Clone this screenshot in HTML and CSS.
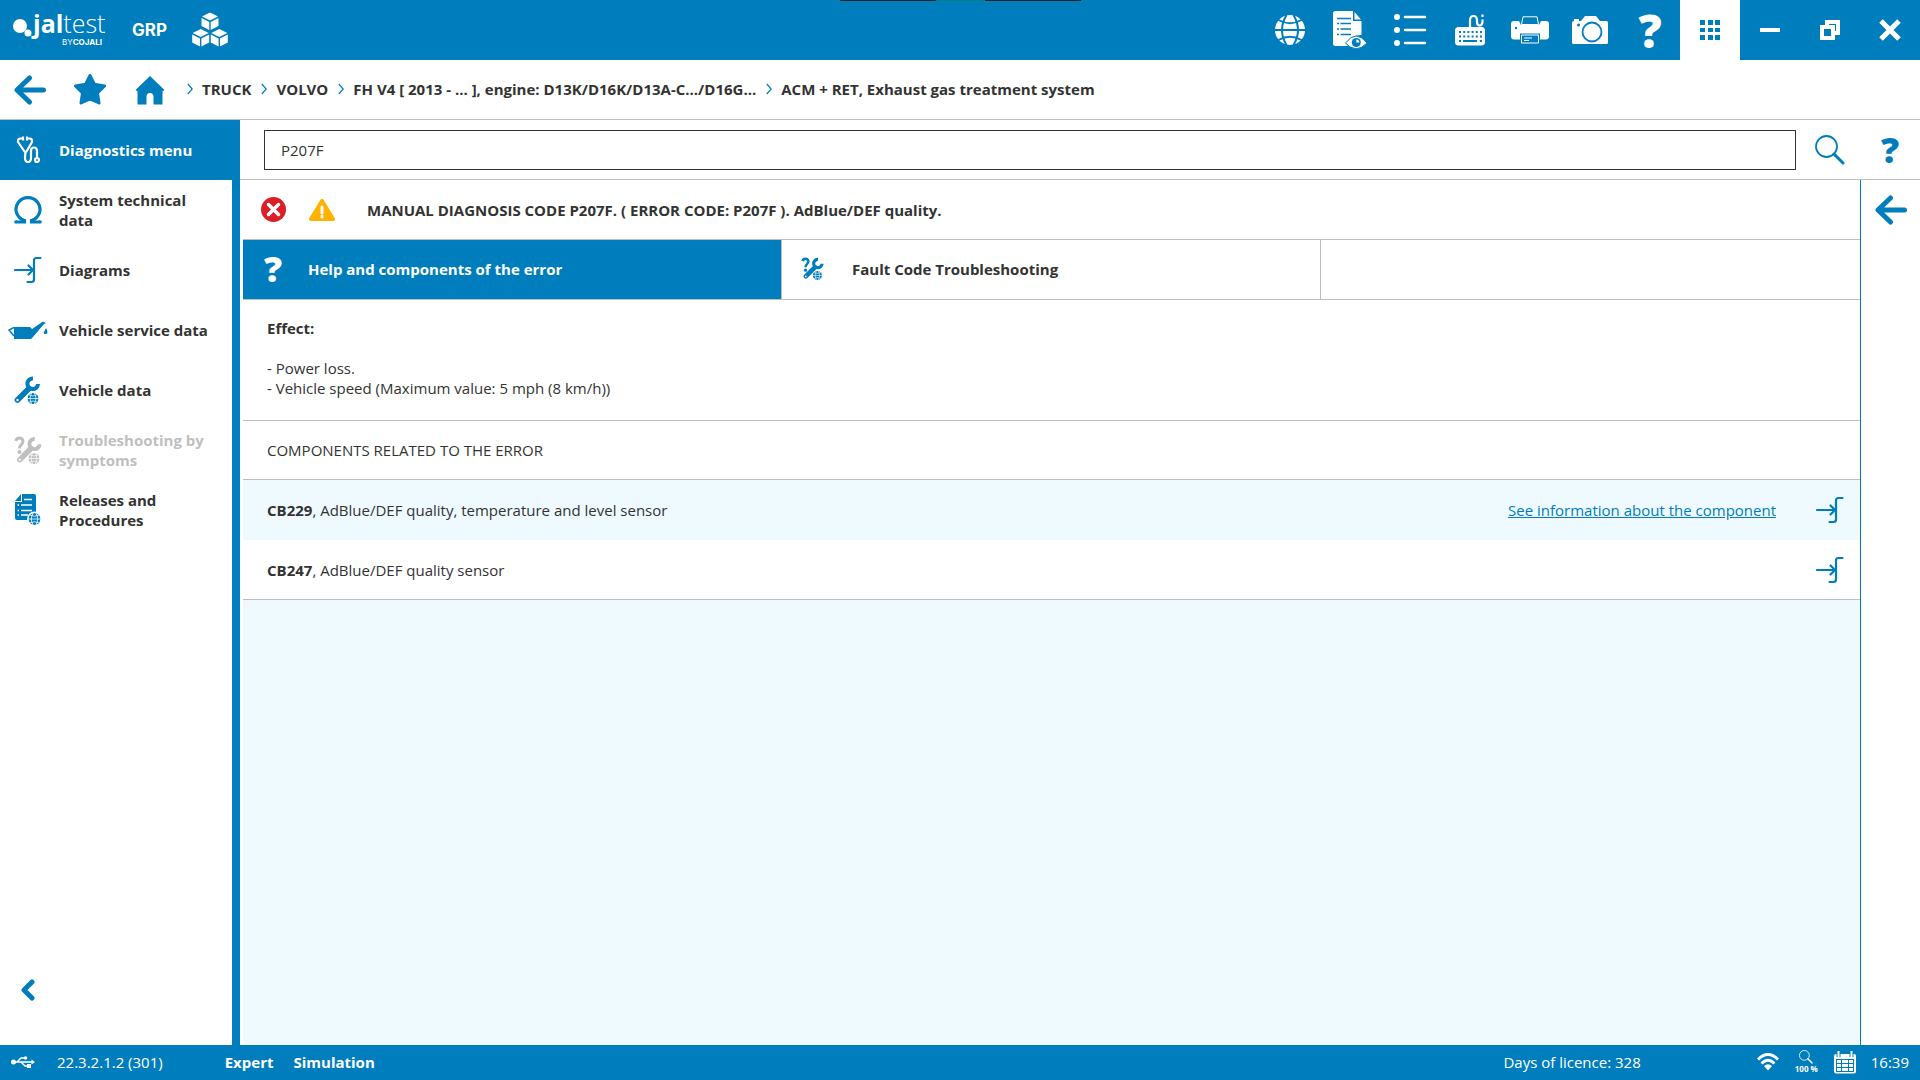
FILE: index.html
```
<!DOCTYPE html>
<html lang="en">
<head>
  <meta charset="UTF-8" />
  <meta name="viewport" content="width=device-width, initial-scale=1.0" />
  <title>Jaltest - Diagnostics</title>
  <link rel="stylesheet" href="styles.css">
</head>

<body>
  <!-- shared icons -->
  <svg class="sprite" aria-hidden="true">
    <symbol id="i-globe" viewBox="0 0 30 30">
      <circle cx="15" cy="15" r="15" fill="currentColor"/>
      <g fill="none" stroke="var(--cut)" stroke-width="2">
        <path d="M0 15H30M3.500 5Q15 11.500 26.500 5M3.500 25Q15 18.500 26.500 25"/>
        <path d="M11.500 0Q2.500 15 11.500 30M18.500 0Q27.500 15 18.500 30"/>
      </g>
    </symbol>
    <symbol id="i-arrow" viewBox="0 0 32 30">
      <path d="M29.500 15H4M15.500 3 3 15 15.500 27" fill="none" stroke="currentColor" stroke-width="5" stroke-linecap="round" stroke-linejoin="round"/>
    </symbol>
    <symbol id="i-diagram" viewBox="0 0 28 28">
      <g fill="none" stroke="currentColor" stroke-width="2.200" stroke-linecap="round" stroke-linejoin="round">
        <path d="M1 14H19M14.500 9.500 19 14 14.500 18.500"/>
        <path d="M26.500 2H22.500Q20 2 20 4.500V23.500Q20 26 17.500 26H13.500"/>
      </g>
    </symbol>
    <symbol id="i-wrench" viewBox="0 0 28 28">
      <path d="M4.500 24 16 12.500" stroke="currentColor" stroke-width="5.800" stroke-linecap="round"/>
      <path d="M20 2.500A5.300 5.300 0 1 0 25 8" fill="none" stroke="currentColor" stroke-width="4"/>
      <circle cx="4.500" cy="24" r="1.200" fill="var(--cut)"/>
    </symbol>
    <symbol id="i-trouble" viewBox="0 0 28 28">
      <path d="M1.800 5Q2.500 2 5.500 2T9 5.300Q9 7.500 7 9Q5.500 10.300 5.500 12.500" fill="none" stroke="currentColor" stroke-width="3"/>
      <circle cx="5.500" cy="16" r="2" fill="currentColor"/>
      <use href="#i-wrench" x="1.500" y="0" width="27" height="28"/>
      <circle cx="20" cy="22.500" r="6.500" fill="var(--cut)"/>
      <use href="#i-globe" x="14.500" y="17" width="11" height="11"/>
    </symbol>
    <symbol id="i-chevron" viewBox="0 0 6 12">
      <path d="M.8 1 5.200 6 .8 11" fill="none" stroke="currentColor" stroke-width="1.200"/>
    </symbol>
    <symbol id="i-search" viewBox="0 0 30 30">
      <circle cx="11.500" cy="11.500" r="10.500" fill="none" stroke="currentColor" stroke-width="1.800"/>
      <path d="M19 19 28 28" stroke="currentColor" stroke-width="3" stroke-linecap="round"/>
    </symbol>
  </svg>

  <header class="topbar">
    <div class="notch"></div>
    <svg class="logo" width="120" height="60" viewBox="0 0 120 60" role="img" aria-label="Jaltest by Cojali">
      <circle cx="20" cy="26" r="7"/>
      <circle cx="28" cy="33" r="3.500"/>
      <text x="33" y="33" font-size="25"><tspan font-weight="700">jal</tspan><tspan font-weight="300">test</tspan></text>
      <text class="byline" x="62" y="45" font-size="8">BY<tspan font-weight="700">COJALI</tspan></text>
    </svg>
    <span class="brand">GRP</span>
    <svg class="cubes" width="36" height="36" viewBox="0 0 36 36">
      <g id="cube">
        <path d="M18 .5 26 4.500 18 8.500 10 4.500z"/>
        <path d="M9.500 6 17.300 10V18L9.500 14zM26.500 6 18.700 10V18L26.500 14z"/>
      </g>
      <use href="#cube" x="-9.300" y="16.500"/>
      <use href="#cube" x="9.300" y="16.500"/>
    </svg>

    <div class="tools">
      <button aria-label="Web"><svg width="30" height="30"><use href="#i-globe"/></svg></button>
      <button aria-label="View report">
        <svg width="34" height="38" viewBox="0 0 34 38">
          <path d="M2.500 0H20V10H28.500V24C20 24 16 28 13 32L15 35H2.500Q0 35 0 32.500V2.500Q0 0 2.500 0zM21.500 1 28 8.500H21.500z" fill="currentColor"/>
          <path d="M4 7.500H18M7.500 12.500H18M7.500 18H18M7.500 23.500H18" stroke="var(--cut)" stroke-width="1.500"/>
          <path d="M4 12.500H6M4 18H6M4 23.500H6" stroke="var(--cut)" stroke-width="1.500"/>
          <path d="M12.500 32Q23 18 34 32Q23 43.500 12.500 32z" fill="currentColor" stroke="var(--cut)"/>
          <circle cx="23.300" cy="31.500" r="4.500" fill="var(--cut)"/>
          <path d="M23.300 31.500V28.500A3 3 0 0 1 26.300 31.500z" fill="currentColor"/>
        </svg>
      </button>
      <button aria-label="List">
        <svg width="34" height="34" viewBox="0 0 34 34">
          <g fill="currentColor"><circle cx="4" cy="4" r="3"/><circle cx="4" cy="17" r="3"/><circle cx="4" cy="30" r="3"/></g>
          <path d="M12 4H32M12 17H32M12 30H32" stroke="currentColor" stroke-width="2.500" stroke-linecap="round"/>
        </svg>
      </button>
      <button aria-label="Keyboard">
        <svg width="32" height="32" viewBox="0 0 32 32">
          <path d="M16 14V6.500Q16 2 19.500 2T23 6.500V8Q23 11.500 25.500 11.500T28.500 8V5.500M28.500 3V.5" fill="none" stroke="currentColor" stroke-width="2.200"/>
          <rect x="1" y="13" width="30" height="18.500" rx="3.500" fill="currentColor"/>
          <path d="M5 18H28M5 22.500H28" stroke="var(--cut)" stroke-width="2" stroke-dasharray="2 2.200"/>
          <path d="M5 27H7M9 27H23M25.800 27H28" stroke="var(--cut)" stroke-width="2"/>
        </svg>
      </button>
      <button aria-label="Print">
        <svg width="38" height="28" viewBox="0 0 38 28">
          <path d="M3 5H8L10 9H28L30 5H35Q38 5 38 8V20Q38 23.500 35 23.500H3Q0 23.500 0 20V8Q0 5 3 5z" fill="currentColor"/>
          <path d="M9 17.500H29V24H9z" fill="var(--cut)"/>
          <path d="M12 .8H26L27.500 8.500H10.500zM10.500 19H27.500V27H10.500z" fill="var(--cut)" stroke="currentColor"/>
          <path d="M13 22H21M13 24.500H18" stroke="currentColor"/>
          <circle cx="5" cy="12" r="1.200" fill="var(--cut)"/>
        </svg>
      </button>
      <button aria-label="Screenshot">
        <svg width="36" height="30" viewBox="0 0 36 30">
          <path d="M2 6V4H7V6H9L13 1H24L28 6H34.500Q36 6 36 7.500V27.500Q36 29 34.500 29H1.500Q0 29 0 27.500V7.500Q0 6 2 6z" fill="currentColor"/>
          <circle cx="20" cy="17" r="9.500" fill="none" stroke="var(--cut)" stroke-width="1.800"/>
          <circle cx="6.500" cy="10" r="1.500" fill="var(--cut)"/>
        </svg>
      </button>
      <button class="help-lg" aria-label="Help">?</button>
      <button class="apps" aria-label="Applications">
        <svg width="20" height="20" viewBox="0 0 20 20">
          <path d="M0 0H5V5H0zM8 0H13V5H8zM15 0H20V5H15zM0 8H5V12H0zM8 8H13V12H8zM15 8H20V12H15zM0 15H5V20H0zM8 15H13V20H8zM15 15H20V20H15z"/>
        </svg>
      </button>
      <button aria-label="Minimize"><svg width="20" height="4"><rect width="20" height="4"/></svg></button>
      <button aria-label="Restore">
        <svg width="20" height="20" viewBox="0 0 20 20">
          <path fill-rule="evenodd" d="M5 0H20V15H15V20H0V5H5zM9 4V5H15V11H16V4zM4 9V16H11V9z"/>
        </svg>
      </button>
      <button aria-label="Close"><svg width="22" height="22" viewBox="0 0 22 22"><path d="M2 2 20 20M20 2 2 20" stroke="currentColor" stroke-width="5"/></svg></button>
    </div>
  </header>

  <nav class="crumbs" aria-label="Breadcrumb">
    <button aria-label="Back"><svg width="32" height="30"><use href="#i-arrow"/></svg></button>
    <button aria-label="Favourites">
      <svg width="32" height="31" viewBox="0 0 32 31"><path d="M16 1.500 20.400 10.200 30.500 12 23.500 19 25 29 16 24.800 7 29 8.500 19 1.500 12 11.600 10.200z" stroke="currentColor" stroke-width="3" stroke-linejoin="round"/></svg>
    </button>
    <button aria-label="Home">
      <svg width="30" height="30" viewBox="0 0 30 30"><path d="M15 1 29.500 15 28 16H27.500V29.500H18.500V22Q18.500 18 15 18T11.500 22V29.500H2.500V16H2L.5 15z"/></svg>
    </button>
    <ol class="trail">
      <li><svg width="6" height="12"><use href="#i-chevron"/></svg><a href="#">TRUCK</a></li>
      <li><svg width="6" height="12"><use href="#i-chevron"/></svg><a href="#">VOLVO</a></li>
      <li><svg width="6" height="12"><use href="#i-chevron"/></svg><a href="#">FH V4 [ 2013 - ... ], engine: D13K/D16K/D13A-C.../D16G...</a></li>
      <li><svg width="6" height="12"><use href="#i-chevron"/></svg><a href="#">ACM + RET, Exhaust gas treatment system</a></li>
    </ol>
  </nav>

  <div class="layout">
    <aside class="sidebar">
      <a class="item active" href="#">
        <span class="ico">
          <svg width="24" height="28" viewBox="0 0 24 28">
            <g fill="none" stroke="currentColor" stroke-width="2.200" stroke-linejoin="round">
              <path d="M7 2.500H4Q1.500 3 2 6L8.500 15.500H10.500L16 6Q16.500 3 14 2.500H11"/>
              <path d="M7 .5V4.500M11 .5V4.500M9.500 15.500 9 22Q9 26 12 26T15 22V15Q15 11.500 18 11.500T21 15V22"/>
              <circle cx="21" cy="24" r="2"/>
            </g>
          </svg>
        </span>
        <span>Diagnostics menu</span>
      </a>
      <a class="item" href="#">
        <span class="ico">
          <svg width="28" height="28" viewBox="0 0 28 28"><path d="M1.500 24.500 2 26H10.500V24.500A12 11.700 0 1 1 17.500 24.500V26H26L26.500 24.500" fill="none" stroke="currentColor" stroke-width="3.200"/></svg>
        </span>
        <span>System technical data</span>
      </a>
      <a class="item" href="#">
        <span class="ico"><svg width="28" height="28"><use href="#i-diagram"/></svg></span>
        <span>Diagrams</span>
      </a>
      <a class="item" href="#">
        <span class="ico">
          <svg width="40" height="18" viewBox="0 0 40 18">
            <path d="M6 6H22L24 8 35 .5 38 2 36 3 25 16 23 18H6z"/>
            <path d="M6 6.500 1 9 6 15" fill="none" stroke="currentColor" stroke-width="1.500"/>
            <path d="M38 7Q41 12.500 38 13T36 11z"/>
          </svg>
        </span>
        <span>Vehicle service data</span>
      </a>
      <a class="item" href="#">
        <span class="ico">
          <svg width="28" height="28" viewBox="0 0 28 28">
            <use href="#i-wrench" x="-1" y="0" width="28" height="28"/>
            <circle cx="19" cy="22.500" r="6.500" fill="var(--cut)"/>
            <use href="#i-globe" x="13.500" y="17" width="11" height="11"/>
          </svg>
        </span>
        <span>Vehicle data</span>
      </a>
      <a class="item disabled" href="#" aria-disabled="true">
        <span class="ico"><svg width="28" height="28"><use href="#i-trouble"/></svg></span>
        <span>Troubleshooting by symptoms</span>
      </a>
      <a class="item" href="#">
        <span class="ico">
          <svg width="28" height="32" viewBox="0 0 28 32">
            <path d="M8 0H20Q22 0 22 2V26H3Q1 26 1 24V8H8zM7 0V7H1z"/>
            <path d="M10 5.500H18M7 11H18M7 16.500H18M7 21H14M3.500 11H5M3.500 16.500H5M3.500 21H5" stroke="var(--cut)" stroke-width="1.500"/>
            <circle cx="20.500" cy="25" r="7.500" fill="var(--cut)"/>
            <use href="#i-globe" x="14.500" y="19" width="12" height="12"/>
          </svg>
        </span>
        <span>Releases and Procedures</span>
      </a>
      <button class="collapse" aria-label="Collapse menu">
        <svg width="14" height="22" viewBox="0 0 14 22"><path d="M11 3 3 11 11 19" fill="none" stroke="currentColor" stroke-width="5" stroke-linecap="round" stroke-linejoin="round"/></svg>
      </button>
    </aside>

    <div class="workspace">
      <form class="search">
        <input type="text" value="P207F" aria-label="Error code">
        <button type="button" aria-label="Search"><svg width="30" height="30"><use href="#i-search"/></svg></button>
        <button type="button" class="help" aria-label="Help">?</button>
      </form>

      <div class="panels">
        <main class="content">
          <div class="alert">
            <svg width="25" height="25" viewBox="0 0 25 25"><circle cx="12.500" cy="12.500" r="12.500" fill="#dc1f26"/><path d="M7.500 7.500 17.500 17.500M17.500 7.500 7.500 17.500" stroke="#fff" stroke-width="3.500" stroke-linecap="round"/></svg>
            <svg width="26" height="22" viewBox="0 0 26 22"><path d="M13 2 24 20H2z" fill="#ffb300" stroke="#ffb300" stroke-width="4" stroke-linejoin="round"/><path d="M13 8V14M13 17.300V18" stroke="#fff" stroke-width="3" stroke-linecap="round"/></svg>
            <h1>MANUAL DIAGNOSIS CODE P207F. ( ERROR CODE: P207F ). AdBlue/DEF quality.</h1>
          </div>

          <div class="tabs" role="tablist">
            <button class="tab active" role="tab" aria-selected="true"><span class="ico help">?</span>Help and components of the error</button>
            <button class="tab" role="tab" aria-selected="false"><span class="ico"><svg width="23" height="23"><use href="#i-trouble"/></svg></span>Fault Code Troubleshooting</button>
          </div>

          <section class="effect">
            <h2>Effect:</h2>
            <p>- Power loss.<br>- Vehicle speed (Maximum value: 5 mph (8 km/h))</p>
          </section>

          <h2 class="heading">COMPONENTS RELATED TO THE ERROR</h2>
          <ul class="components">
            <li>
              <span><b>CB229</b>, AdBlue/DEF quality, temperature and level sensor</span>
              <a href="#">See information about the component</a>
              <button aria-label="Diagram of CB229"><svg width="28" height="28"><use href="#i-diagram"/></svg></button>
            </li>
            <li>
              <span><b>CB247</b>, AdBlue/DEF quality sensor</span>
              <button aria-label="Diagram of CB247"><svg width="28" height="28"><use href="#i-diagram"/></svg></button>
            </li>
          </ul>
        </main>
        <div class="rail">
          <button aria-label="Go back"><svg width="32" height="30"><use href="#i-arrow"/></svg></button>
        </div>
      </div>
    </div>
  </div>

  <footer class="status">
    <svg class="usb" width="24" height="12" viewBox="0 0 24 12">
      <circle cx="2.500" cy="6" r="2.500"/>
      <path d="M3 6H21M6 6 10 2H14M10 6 14 10H17" fill="none" stroke="currentColor" stroke-width="1.500"/>
      <path d="M20.500 3.500 24 6 20.500 8.500zM16 8H20V12H16z"/><circle cx="14.500" cy="2" r="1.800"/>
    </svg>
    <span class="version">22.3.2.1.2 (301)</span>
    <b>Expert</b>
    <b>Simulation</b>
    <span class="licence">Days of licence: 328</span>
    <svg class="wifi" width="22" height="18" viewBox="0 0 22 18">
      <path d="M1 6.500Q11-3.500 21 6.500M4.500 10.500Q11 4 17.500 10.500" fill="none" stroke="currentColor" stroke-width="2.800"/>
      <path d="M7 13Q11 9.500 15 13L11 17.500z"/>
    </svg>
    <span class="zoom"><svg width="14" height="14"><use href="#i-search"/></svg>100 %</span>
    <svg class="calendar" width="22" height="23" viewBox="0 0 22 23">
      <path d="M2 3H20Q22 3 22 5V20.500Q22 22.500 20 22.500H2Q0 22.500 0 20.500V5Q0 3 2 3z"/>
      <path d="M2 8.500H20M2 12.500H20M2 16.500H20M2 20.500H20M2.500 8V21M7.500 8V21M14.500 8V21M19.500 8V21" stroke="var(--cut)"/>
      <path d="M4.500 0V6M17.500 0V6" stroke="var(--cut)" stroke-width="4"/><path d="M4.500 0V6M17.500 0V6" stroke="currentColor" stroke-width="2"/>
    </svg>
    <time>16:39</time>
  </footer>
</body>
</html>
```

FILE: styles.css
```
:root {
  --blue: #007dbc;
  --line: #bfbfbf;
  --pale: #eefaff;
  --text: #333;
  --cut: #fff;
}
* {
  box-sizing: border-box;
}
body {
  margin: 0;
  height: 100vh;
  display: flex;
  flex-direction: column;
  font-family: "Open Sans", "Noto Sans", sans-serif;
  font-size: 15px;
  line-height: 20px;
  color: var(--text);
  background: #fff;
}
a {
  color: inherit;
  text-decoration: none;
}
button {
  border: none;
  padding: 0;
  background: none;
  font: inherit;
  color: var(--blue);
  display: flex;
  align-items: center;
  justify-content: center;
  flex: none;
  width: 60px;
  height: 60px;
  cursor: pointer;
}
svg {
  flex: none;
  display: block;
  fill: currentColor;
}
h1, h2, p, ul, ol {
  margin: 0;
  padding: 0;
  font-size: 15px;
}
li {
  list-style: none;
}
.sprite {
  position: absolute;
  width: 0;
  height: 0;
}
.ico {
  display: flex;
  align-items: center;
  justify-content: center;
  flex: none;
}
.help {
  font-size: 36px;
  font-weight: 800;
}

/* top bar */
.topbar {
  position: relative;
  --cut: var(--blue);
  display: flex;
  align-items: center;
  flex: none;
  height: 60px;
  background: var(--blue);
  color: #fff;
}
.notch {
  position: absolute;
  top: 0;
  left: 50%;
  width: 241px;
  height: 1px;
  margin-left: -120px;
  background: linear-gradient(to right, #222 40%, #008080 40%, #008080 60%, #222 60%);
}
.byline {
  font-family: Inter, sans-serif;
}
.brand {
  margin-left: 12px;
  width: 60px;
  font-family: Inter, sans-serif;
  font-size: 17px;
  font-weight: 700;
}
.tools {
  display: flex;
  margin-left: auto;
}
.tools button {
  color: #fff;
}
.tools .apps {
  background: #fff;
  color: var(--blue);
}
.tools .help-lg {
  font-size: 46px;
  font-weight: 800;
}

/* breadcrumb */
.crumbs {
  display: flex;
  align-items: center;
  flex: none;
  height: 60px;
  border-bottom: 1px solid var(--line);
  font-weight: 700;
}
.trail {
  display: flex;
  gap: 10px;
  margin-left: 7px;
  padding-bottom: 2px;
}
.trail li {
  display: flex;
  align-items: center;
  gap: 9px;
}
.trail svg {
  color: var(--blue);
}

.layout {
  display: flex;
  flex: 1;
  min-height: 0;
}

/* left menu */
.sidebar {
  display: flex;
  flex-direction: column;
  flex: none;
  width: 240px;
  background: linear-gradient(to left, var(--blue) 8px, #fff 8px);
  font-weight: 700;
}
.item {
  display: flex;
  align-items: center;
  gap: 4px;
  height: 60px;
  padding-right: 18px;
}
.item .ico {
  width: 55px;
  color: var(--blue);
}
.item.active {
  background: var(--blue);
  color: #fff;
}
.item.active .ico {
  color: #fff;
}
.item.disabled, .item.disabled .ico {
  color: var(--line);
}
.collapse {
  width: 55px;
  margin-top: auto;
  margin-bottom: 25px;
}

/* work area */
.workspace {
  display: flex;
  flex-direction: column;
  flex: 1;
  min-width: 0;
}
.search {
  display: flex;
  align-items: center;
  flex: none;
  height: 60px;
  padding-left: 24px;
  border-bottom: 1px solid var(--line);
}
.search input {
  flex: 1;
  height: 40px;
  margin-right: 4px;
  padding: 0 16px;
  border: 1px solid #333;
  font: inherit;
  color: inherit;
}
.panels {
  display: flex;
  flex: 1;
}
.content {
  flex: 1;
  margin-left: 3px;
  background: var(--pale);
}
.rail {
  width: 60px;
  border-left: 1px solid var(--blue);
}
.alert {
  display: flex;
  align-items: center;
  gap: 23px;
  height: 60px;
  padding-left: 18px;
  border-bottom: 1px solid var(--line);
  background: #fff;
}
.alert h1 {
  padding-left: 9px;
}
.tabs {
  display: grid;
  grid-template-columns: repeat(3, 1fr);
  height: 60px;
  border-bottom: 1px solid var(--line);
  background: #fff;
}
.tab {
  width: auto;
  height: auto;
  justify-content: flex-start;
  gap: 10px;
  padding-bottom: 2px;
  border-right: 1px solid var(--line);
  color: var(--text);
  font-weight: 700;
}
.tab .ico {
  width: 60px;
  color: var(--blue);
}
.tab.active {
  gap: 5px;
  background: var(--blue);
  color: #fff;
}
.tab.active .ico {
  color: #fff;
}
.effect {
  padding: 18px 24px 22px;
  border-bottom: 1px solid var(--line);
  background: #fff;
}
.effect h2 {
  margin-bottom: 20px;
}
.heading {
  padding: 19px 24px;
  border-bottom: 1px solid var(--line);
  background: #fff;
  font-weight: 400;
}
.components {
  border-bottom: 1px solid var(--line);
}
.components li {
  display: flex;
  align-items: center;
  height: 60px;
  padding-left: 24px;
}
.components li:nth-child(even) {
  height: 59px;
  background: #fff;
}
.components span {
  flex: 1;
}
.components a {
  margin-right: 24px;
  color: var(--blue);
  text-decoration: underline;
}

/* status bar */
.status {
  --cut: var(--blue);
  display: flex;
  align-items: center;
  flex: none;
  height: 35px;
  padding: 0 11px 1px;
  background: var(--blue);
  color: #fff;
}
.version {
  margin: 0 62px 0 22px;
}
.status b + b {
  margin-left: 20px;
}
.licence {
  margin-left: auto;
  margin-right: 116px;
}
.zoom {
  display: flex;
  flex-direction: column;
  align-items: center;
  margin: 0 16px;
  font-size: 8px;
  font-weight: 700;
  line-height: 10px;
}
.calendar {
  margin-right: 15px;
}
```
